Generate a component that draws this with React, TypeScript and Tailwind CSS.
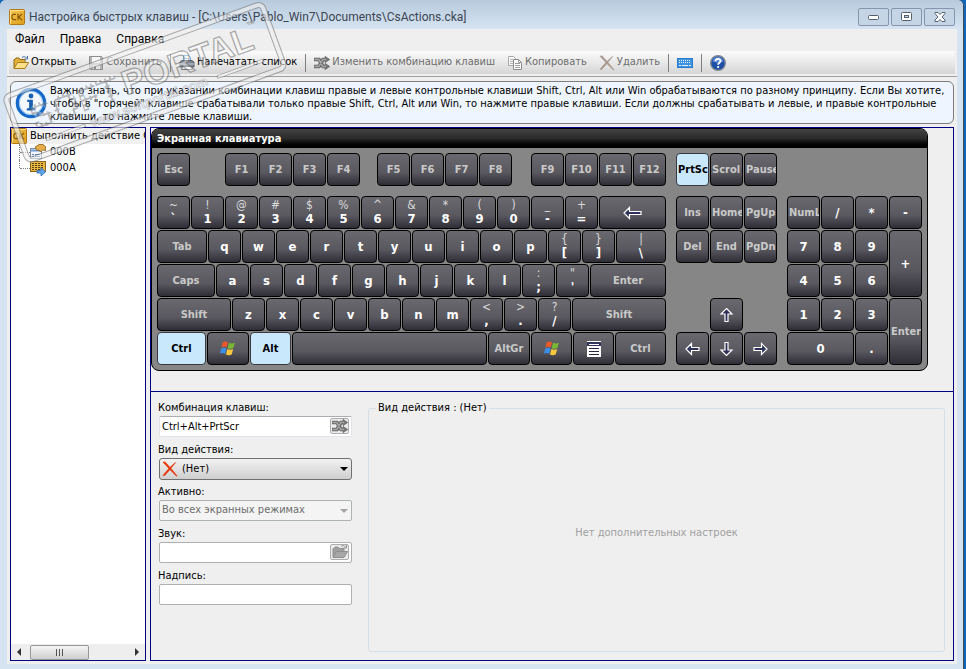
import { useState } from "react";
import type { ReactNode } from "react";
import clsx from "clsx";

const UI_FONT = "font-['DejaVu_Sans_Condensed','DejaVu_Sans',sans-serif]";
const CAPTION_FONT = "font-['Roboto','Noto_Sans',sans-serif]";

function AppIcon() {
  return (
    <svg width="16" height="16" viewBox="0 0 16 16" className="shrink-0" aria-hidden="true">
      <defs>
        <linearGradient id="gold" x1="0" y1="0" x2="1" y2="1">
          <stop offset="0" stopColor="#f7c955" />
          <stop offset="1" stopColor="#dc9c18" />
        </linearGradient>
      </defs>
      <rect x="0.5" y="0.5" width="15" height="15" rx="1" fill="url(#gold)" stroke="#b37a12" />
      <path d="M1.5 14.5V1.5H14.5" fill="none" stroke="#ffe08c" />
      <path d="M7 5.300H4.200L3 6.500v3l1.200 1.200H7M9 4.800v6.400M13 4.800L9.800 8l3.200 3.200" fill="none" stroke="#855608" strokeWidth="1.200" />
    </svg>
  );
}

function FolderIcon({ muted = false }: { muted?: boolean }) {
  return (
    <svg width="16" height="16" viewBox="0 0 16 16" className="shrink-0" aria-hidden="true">
      <path d="M1 13V4.500h1l1-1.500h3l1 1.500h5V8" fill={muted ? "#a0a0a0" : "#e3b23c"} stroke={muted ? "#8e8e8e" : "#8f6a12"} />
      <path d="M1 13.500L4.500 7.500H15.500L12 13.500z" fill={muted ? "#a8a8a8" : "#ffe08a"} stroke={muted ? "#8e8e8e" : "#a67c1a"} />
      <path d="M9 2.500c1.500-1.500 3.500-1 4.500.500M14.500 1v3h-3" fill="none" stroke={muted ? "#8e8e8e" : "#4b6ea5"} />
    </svg>
  );
}

function FloppyIcon() {
  return (
    <svg width="16" height="16" viewBox="0 0 16 16" className="shrink-0" aria-hidden="true">
      <path d="M1.500 1.500h12l1 1v12h-12l-1-1z" fill="#b4b4b4" stroke="#8f8f8f" />
      <rect x="4" y="2" width="8" height="6" fill="#f6f6f6" />
      <rect x="5" y="10" width="7" height="4" fill="#e6e6e6" />
      <rect x="6" y="11" width="2" height="3" fill="#8f8f8f" />
    </svg>
  );
}

function PrinterIcon() {
  return (
    <svg width="16" height="16" viewBox="0 0 16 16" className="shrink-0" aria-hidden="true">
      <path d="M4.500 7V.500h5l2 2V7" fill="#fff" stroke="#6fb0dc" />
      <path d="M6 3.500h3M6 5.500h4" stroke="#7cc0ea" />
      <path d="M1 7l2-1.500h10L15 7v5H1z" fill="#7d8590" stroke="#444a52" strokeWidth=".8" />
      <path d="M1 9h14" stroke="#c6ccd4" />
      <path d="M3.500 11.500h9l1 3h-11z" fill="#f5f8fb" stroke="#555c66" strokeWidth=".8" />
    </svg>
  );
}

function ShuffleIcon() {
  return (
    <svg width="16" height="14" viewBox="0 0 16 14" className="shrink-0" aria-hidden="true">
      <path d="M0 3.500h5l4 7h3M0 10.500h5l4-7h3" fill="none" stroke="#666" strokeWidth="3.600" />
      <path d="M11 .3L15.800 3.500 11 6.700zM11 7.300l4.800 3.200L11 13.700z" fill="#777" stroke="#555" strokeWidth=".5" />
      <path d="M.6 3.500h4.200l4 7H12M.6 10.500h4.200l4-7H12" fill="none" stroke="#aaa" strokeWidth="1.500" />
    </svg>
  );
}

function CopyIcon() {
  return (
    <svg width="16" height="16" viewBox="0 0 16 16" className="shrink-0" aria-hidden="true">
      <path d="M1.500 1.500h5l2 2v7h-7z" fill="#fafafa" stroke="#a9a9a9" />
      <path d="M3 4.500h3M3 6.500h3M3 8.500h3" stroke="#b5b5b5" />
      <path d="M6.500 4.500h5l3 3v7h-8z" fill="#fff" stroke="#8b8b8b" />
      <path d="M11.500 4.500v3h3M8 8.500h5M8 10.500h5M8 12.500h5" fill="none" stroke="#9d9d9d" />
    </svg>
  );
}

function CrossIcon({ color }: { color: string }) {
  return (
    <svg width="16" height="16" viewBox="0 0 16 16" className="shrink-0" aria-hidden="true">
      <path d="M.5 1l2.500-.5 5 5.500 5-4.500 1.500-.5-5.300 6.300L15.500 15l-1 .5L8 9 2.500 15 .5 14.500 6.500 7.500z" fill={color} />
    </svg>
  );
}

function KeyboardIcon() {
  return (
    <svg width="16" height="10" viewBox="0 0 16 10" className="shrink-0" aria-hidden="true">
      <rect x=".5" y=".5" width="15" height="9" fill="#3d93e0" stroke="#2b7ccb" />
      <path d="M2 2.500h12M2 4.500h12" stroke="#e4f2ff" strokeDasharray="1 1" />
      <path d="M2 7.500h2M5 7.500h6M12 7.500h2" stroke="#e4f2ff" />
    </svg>
  );
}

function HelpIcon() {
  return (
    <svg width="16" height="16" viewBox="0 0 16 16" className="shrink-0" aria-hidden="true">
      <circle cx="8" cy="8" r="7.300" fill="#1c4fa5" stroke="#7d8794" strokeWidth="1.400" />
      <path d="M2.500 6.500a5.600 5.600 0 0 1 11 0c-3 1.500-8 1.500-11 0z" fill="#5a8ad6" />
      <path d="M5.600 6.200c0-3.200 4.900-3 4.900-.2C10.500 7.700 8.100 7.800 8.100 9.800" fill="none" stroke="#fff" strokeWidth="1.800" />
      <rect x="7.200" y="11" width="1.900" height="1.900" fill="#fff" />
    </svg>
  );
}

function InfoIcon() {
  return (
    <svg width="32" height="34" viewBox="0 0 34 34" className="shrink-0" aria-hidden="true">
      <circle cx="17" cy="17" r="14.500" fill="#f4f9ff" stroke="#1468c8" strokeWidth="3.500" />
      <circle cx="17" cy="17" r="12.300" fill="none" stroke="#7db7f0" strokeWidth=".8" />
      <circle cx="17" cy="9.500" r="2.600" fill="#1b5fae" />
      <path d="M13 13.500h6v9h2.500v2.500h-9v-2.500H15v-6.500h-2z" fill="#1b5fae" />
    </svg>
  );
}

function PropertiesIcon() {
  return (
    <svg width="16" height="16" viewBox="0 0 16 16" className="shrink-0" aria-hidden="true">
      <rect x=".5" y="4.500" width="11" height="10" fill="#f3f7fc" stroke="#7c8ea6" />
      <path d="M1 6.500h10" stroke="#6f9bd2" strokeWidth="2" />
      <path d="M2 10.500h2M5 10.500h5M2 12.500h2M5 12.500h5" stroke="#5f86bb" />
      <path d="M5 3l4-2.500h4l2.500 2v4l-3-.5-2 2-1.500-2-2 .5z" fill="#e6ae4c" stroke="#8c5e1b" strokeWidth=".8" />
    </svg>
  );
}

function KeysIcon() {
  return (
    <svg width="16" height="16" viewBox="0 0 16 16" className="shrink-0" aria-hidden="true">
      <rect x=".5" y="1.500" width="15" height="10" fill="#e9b844" stroke="#8a641a" />
      <path d="M2 3.500h12M2 5.500h12M2 7.500h12M2 9.500h12" stroke="#5f4410" strokeDasharray="2 1" />
      <path d="M7 10.500h4V7.500l4.500 4.500-4.500 4v-3H7z" fill="#5fa8ee" stroke="#2a65ac" strokeWidth=".8" />
    </svg>
  );
}

function WindowsFlag() {
  return (
    <svg width="16" height="15" viewBox="0 0 16 15" aria-hidden="true">
      <path d="M2.600 1.500C4.500.2 6.300.3 8 1.300L6.700 6.600C5 5.600 3.100 5.600 1.300 6.700z" fill="#e8582a" />
      <path d="M9 1.800c1.800 1 3.800.9 5.900-.1l-1.500 5.400c-2 1-3.900 1-5.700.1z" fill="#79b833" />
      <path d="M1.100 7.700c1.800-1.100 3.600-1.100 5.400-.1L5.200 12.800C3.500 11.800 1.700 11.800-.1 12.900z" fill="#3c8fe6" />
      <path d="M7.400 8.100c1.900 1 3.800 1 5.800 0l-1.500 5.300c-2 1-3.900 1-5.700 0z" fill="#f8c73c" />
    </svg>
  );
}

function MenuKeyIcon() {
  return (
    <svg width="14" height="16" viewBox="0 0 14 16" aria-hidden="true">
      <path d="M0 .5h14" stroke="#fff" />
      <rect x="0" y="1" width="14" height="5" fill="#33365c" />
      <path d="M2 3.500h10" stroke="#fff" />
      <rect x="0" y="5" width="14" height="11" fill="#fff" />
      <path d="M2 7.500h10M2 10.500h10M2 13.500h10" stroke="#26263a" />
    </svg>
  );
}

function ArrowIcon({ className, long = false }: { className?: string; long?: boolean }) {
  const w = long ? 19 : 15;
  return (
    <svg width={w} height="14" viewBox={`0 0 ${w} 14`} className={className} aria-hidden="true">
      <path d={`M1 7L6.500 1.500V5.500H${w - 1}V8.500H6.500V12.500z`} fill="#2e3059" stroke="#fff" strokeWidth="1.200" />
    </svg>
  );
}

function Watermark() {
  return (
    <svg width="290" height="168" viewBox="0 0 290 168" className="pointer-events-none absolute top-0 left-0" aria-hidden="true">
      <defs>
        <pattern id="dots" width="5" height="5" patternUnits="userSpaceOnUse">
          <rect x="0.500" y="0.500" width="4" height="4" fill="#fff" fillOpacity=".6" stroke="#777" strokeWidth=".8" />
        </pattern>
      </defs>
      <g transform="translate(5 97) rotate(-20)" opacity=".6" fontFamily="'Liberation Sans', Arial, sans-serif" fontWeight="bold">
        <rect x="0" y="0" width="273" height="68" rx="5" fill="none" stroke="#777" strokeWidth="6" />
        <rect x="0" y="0" width="273" height="68" rx="5" fill="none" stroke="#f0f0f0" strokeWidth="4" />
        <text x="17" y="41" fontSize="35" fill="url(#dots)">SOFT</text>
        <text x="115" y="40" fontSize="34" fill="#fff" fillOpacity=".6" stroke="#777" strokeWidth="1.200">PORTAL</text>
        <text x="252" y="19" fontSize="9" fill="#fff" stroke="#888" strokeWidth=".5">™</text>
        <text x="72" y="58" fontSize="13" fill="#f4f4f4" stroke="#999" strokeWidth=".6">www.softportal.com</text>
        <path d="M24 54h42M206 54h50" stroke="#777" strokeWidth="3.500" />
        <path d="M25 54h40M207 54h48" stroke="#f8f8f8" strokeWidth="2" />
      </g>
    </svg>
  );
}

interface KeyProps {
  label?: string;
  top?: string;
  name?: string;
  big?: boolean;
  className?: string;
  children?: ReactNode;
}

function Key({ label, top, name, big, className, children }: KeyProps) {
  const [pressed, setPressed] = useState(label === "PrtSc" || name === "LCtrl" || name === "LAlt");

  return (
    <button
      type="button"
      aria-label={name}
      aria-pressed={pressed}
      onClick={() => setPressed(!pressed)}
      className={clsx(
        "flex h-[33px] shrink-0 flex-col items-center justify-center overflow-hidden rounded-[4px] border font-bold whitespace-nowrap",
        pressed
          ? "border-[#39393f] bg-[#cae8fb] text-black"
          : "border-black bg-linear-to-b from-[#6a696f] via-[#59585f] via-60% to-[#2f2d36]",
        !pressed && (big ? "text-white" : "text-[#c9c9c9]"),
        big ? "text-[13px] leading-[14px]" : "text-[11px] leading-[14px]",
        className ?? "w-[33px]"
      )}
    >
      {top && <span className="text-[12px] leading-[13px] font-normal text-[#dadada]">{top}</span>}
      {label && <span>{label}</span>}
      {children}
    </button>
  );
}

function FKeys({ from, to, className }: { from: number; to: number; className: string }) {
  const keys = [];
  for (let i = from; i <= to; i++) keys.push(`F${i}`);
  return (
    <div className={clsx("flex gap-px", className)}>
      {keys.map((k) => (
        <Key key={k} label={k} />
      ))}
    </div>
  );
}

const digits = [
  ["~", "`"], ["!", "1"], ["@", "2"], ["#", "3"], ["$", "4"], ["%", "5"], ["^", "6"],
  ["&", "7"], ["*", "8"], ["(", "9"], [")", "0"], ["_", "-"], ["+", "="],
];

function Keyboard() {
  return (
    <section className="w-fit overflow-hidden rounded-[8px] border border-black bg-[#868686]">
      <h2 className="h-[19px] bg-linear-to-b from-[#434343] via-[#2a2a2a] to-black pl-[5px] text-[11px] leading-[19px] font-bold text-white">
        Экранная клавиатура
      </h2>
      <div className="flex gap-[10px] p-[5px]">
        <div className="flex flex-col">
          <div className="mb-[10px] flex">
            <Key label="Esc" />
            <FKeys from={1} to={4} className="ml-[35px]" />
            <FKeys from={5} to={8} className="ml-[17px]" />
            <FKeys from={9} to={12} className="ml-[19px]" />
          </div>
          <div className="flex flex-col gap-px">
            <div className="flex gap-px">
              {digits.map(([t, k]) => (
                <Key key={k} top={t} label={k} big />
              ))}
              <Key name="Backspace" className="w-[67px]">
                <ArrowIcon long />
              </Key>
            </div>
            <div className="flex gap-px">
              <Key label="Tab" className="w-[50px]" />
              {"qwertyuiop".split("").map((k) => (
                <Key key={k} label={k} big />
              ))}
              <Key top="{" label="[" big />
              <Key top="}" label="]" big />
              <Key top="|" label="\" big className="w-[50px]" />
            </div>
            <div className="flex gap-px">
              <Key label="Caps" className="w-[58px]" />
              {"asdfghjkl".split("").map((k) => (
                <Key key={k} label={k} big />
              ))}
              <Key top=":" label=";" big />
              <Key top={'"'} label="'" big />
              <Key label="Enter" className="w-[76px]" />
            </div>
            <div className="flex gap-px">
              <Key label="Shift" className="w-[74px]" />
              {"zxcvbnm".split("").map((k) => (
                <Key key={k} label={k} big />
              ))}
              <Key top="<" label="," big />
              <Key top=">" label="." big />
              <Key top="?" label="/" big />
              <Key label="Shift" className="w-[94px]" />
            </div>
            <div className="flex gap-px">
              <Key name="LCtrl" label="Ctrl" className="w-[49px]" />
              <Key name="LWin" className="w-[42px]">
                <WindowsFlag />
              </Key>
              <Key name="LAlt" label="Alt" className="w-[41px]" />
              <Key name="Space" className="flex-1" />
              <Key label="AltGr" className="w-[42px]" />
              <Key name="RWin" className="w-[41px]">
                <WindowsFlag />
              </Key>
              <Key name="Menu" className="w-[41px]">
                <MenuKeyIcon />
              </Key>
              <Key label="Ctrl" className="w-[51px]" />
            </div>
          </div>
        </div>

        <div className="flex flex-col justify-between">
          <div className="flex flex-col gap-[10px]">
            <div className="flex gap-px">
              <Key label="PrtSc" className="w-[33px] items-start pl-px" />
              <Key label="Scrol" className="w-[33px] items-start pl-px" />
              <Key label="Pause" className="w-[33px] items-start pl-px" />
            </div>
            <div className="grid grid-cols-3 gap-px">
              <Key label="Ins" />
              <Key label="Home" className="w-[33px] items-start pl-px" />
              <Key label="PgUp" className="w-[33px] items-start pl-px" />
              <Key label="Del" />
              <Key label="End" />
              <Key label="PgDn" className="w-[33px] items-start pl-px" />
            </div>
          </div>
          <div className="grid grid-cols-3 gap-px">
            <Key name="Up" className="col-start-2 w-[33px]">
              <ArrowIcon className="rotate-90" />
            </Key>
            <Key name="Left" className="col-start-1 w-[33px]">
              <ArrowIcon />
            </Key>
            <Key name="Down">
              <ArrowIcon className="-rotate-90" />
            </Key>
            <Key name="Right">
              <ArrowIcon className="rotate-180" />
            </Key>
          </div>
        </div>

        <div className="grid grid-cols-4 gap-px self-end">
          <Key label="NumL" className="w-[33px] items-start pl-px" />
          <Key label="/" big />
          <Key label="*" big />
          <Key label="-" big />
          <Key label="7" big />
          <Key label="8" big />
          <Key label="9" big />
          <Key label="+" big className="row-span-2 h-full w-[33px]" />
          <Key label="4" big />
          <Key label="5" big />
          <Key label="6" big />
          <Key label="1" big />
          <Key label="2" big />
          <Key label="3" big />
          <Key label="Enter" className="row-span-2 h-full w-[33px] items-start pl-px" />
          <Key label="0" big className="col-span-2 w-full" />
          <Key label="." big />
        </div>
      </div>
    </section>
  );
}

function ToolButton({ icon, label, title, disabled }: { icon: ReactNode; label?: string; title?: string; disabled?: boolean }) {
  return (
    <button
      type="button"
      aria-label={title}
      disabled={disabled}
      className="flex items-center gap-[2px] px-1 whitespace-nowrap text-black disabled:text-[#6d6d6d]"
    >
      {icon}
      {label && <span>{label}</span>}
    </button>
  );
}

function Separator() {
  return <div className="h-[18px] w-px bg-[#808080]" />;
}

function Toolbar() {
  return (
    <div className="border-b border-[#a0a0a0] pb-[2px]">
      <div className="mx-[2px] flex h-[23px] items-center gap-1 bg-linear-to-b from-[#fbfbfb] to-[#d6d6d6]">
        <ToolButton icon={<FolderIcon />} label="Открыть" />
        <ToolButton icon={<FloppyIcon />} label="Сохранить" disabled />
        <Separator />
        <ToolButton icon={<PrinterIcon />} label="Напечатать список" />
        <Separator />
        <ToolButton icon={<ShuffleIcon />} label="Изменить комбинацию клавиш" disabled />
        <ToolButton icon={<CopyIcon />} label="Копировать" disabled />
        <ToolButton icon={<CrossIcon color="#a8998f" />} label="Удалить" disabled />
        <Separator />
        <ToolButton icon={<KeyboardIcon />} title="Клавиатура" />
        <Separator />
        <ToolButton icon={<HelpIcon />} title="Справка" />
      </div>
    </div>
  );
}

function TitleBar() {
  const button = "flex h-[18px] w-[31px] items-center justify-center rounded-[2px] border border-[#8496ad] bg-[#c6d5e5]";
  return (
    <header className="flex h-[29px] items-center rounded-t-[6px] bg-linear-to-b from-[#b7cadc] to-[#d6e4f2] pt-[5px] pr-2 pl-[9px]">
      <AppIcon />
      <h1 className={clsx("ml-1 flex-1 truncate text-[12px] text-[#3b4552]", CAPTION_FONT)}>
        Настройка быстрых клавиш - [C:\Users\Pablo_Win7\Documents\CsActions.cka]
      </h1>
      <div className="flex gap-[2px]">
        <button type="button" aria-label="Свернуть" className={button}>
          <svg width="12" height="6" viewBox="0 0 12 6" aria-hidden="true">
            <rect x=".5" y="1.500" width="10" height="4" rx="1" fill="#fff" stroke="#55606e" />
          </svg>
        </button>
        <button type="button" aria-label="Развернуть" className={button}>
          <svg width="12" height="10" viewBox="0 0 12 10" aria-hidden="true">
            <rect x=".5" y=".5" width="10" height="8" rx="1" fill="#fff" stroke="#55606e" />
            <rect x="3.500" y="3.500" width="4" height="2" fill="#c6d5e5" stroke="#55606e" />
          </svg>
        </button>
        <button type="button" aria-label="Закрыть" className={button}>
          <svg width="12" height="10" viewBox="0 0 12 10" aria-hidden="true">
            <path d="M1 .5h3l2 2 2-2h3v1L8 5l3 3v1.500H8l-2-2-2 2H1V8l3-3-3-3.500z" fill="#fff" stroke="#55606e" />
          </svg>
        </button>
      </div>
    </header>
  );
}

function ActionTree() {
  return (
    <aside className="flex w-[136px] shrink-0 flex-col overflow-hidden border border-[#000080] bg-white">
      <div className="flex h-4 items-center gap-[3px] bg-[#f0f0f0] leading-4 whitespace-nowrap">
        <AppIcon />
        <span>Выполнить действие C</span>
      </div>
      <ul className="ml-[8px] leading-4">
        {[
          { name: "000B", icon: <PropertiesIcon />, last: false },
          { name: "000A", icon: <KeysIcon />, last: true },
        ].map((item) => (
          <li key={item.name} className="flex h-4 items-center">
            <span className={clsx("w-px self-start border-l border-dotted border-[#808080]", item.last ? "h-2" : "h-4")} />
            <span className="w-[10px] border-t border-dotted border-[#808080]" />
            {item.icon}
            <span className="ml-1">{item.name}</span>
          </li>
        ))}
      </ul>
      <div className="mt-auto flex h-4 items-center bg-[#eeeeee]">
        <svg width="16" height="9" viewBox="0 0 16 9" aria-hidden="true">
          <path d="M10 0v8L6 4z" fill="#333" />
        </svg>
        <div className="ml-[3px] flex h-[15px] w-[59px] items-center justify-center gap-[2px] rounded-[2px] border border-[#979797] bg-linear-to-b from-[#f5f5f5] to-[#cfcfcf]">
          <i className="h-[7px] w-px bg-[#555]" />
          <i className="h-[7px] w-px bg-[#555]" />
          <i className="h-[7px] w-px bg-[#555]" />
        </div>
        <svg width="16" height="9" viewBox="0 0 16 9" className="ml-auto" aria-hidden="true">
          <path d="M6 0v8l4-4z" fill="#333" />
        </svg>
      </div>
    </aside>
  );
}

function Field({ id, label, children }: { id: string; label: string; children: ReactNode }) {
  return (
    <div className="flex flex-col">
      <label htmlFor={id} className="h-4 leading-4">
        {label}
      </label>
      <div className="relative ml-px flex h-[22px] w-[193px]">{children}</div>
    </div>
  );
}

function SmallButton({ title, children }: { title: string; children: ReactNode }) {
  return (
    <button
      type="button"
      aria-label={title}
      className="absolute top-[2px] right-[3px] flex h-4 w-[19px] items-center justify-center rounded-[2px] border border-[#adadad] bg-[#ececec]"
    >
      {children}
    </button>
  );
}

function DropArrow({ color }: { color: string }) {
  return (
    <svg width="8" height="4" viewBox="0 0 8 4" className="pointer-events-none absolute top-[9px] right-[4px]" aria-hidden="true">
      <path d="M0 0h8L4 4z" fill={color} />
    </svg>
  );
}

function Settings() {
  const [combo, setCombo] = useState("Ctrl+Alt+PrtScr");
  const [sound, setSound] = useState("");
  const [caption, setCaption] = useState("");
  const input = "h-[21px] w-full rounded-[2px] border bg-white px-[2px] outline-none";

  return (
    <div className="flex flex-1 gap-4 px-[8px] pt-[8px] pb-[8px] pl-[7px]">
      <div className="flex flex-col gap-1">
        <Field id="combo" label="Комбинация клавиш:">
          <input id="combo" type="text" value={combo} onChange={(e) => setCombo(e.target.value)} className={clsx(input, "border-[#e2e3ea] border-t-[#abadb3]")} />
          <SmallButton title="Изменить">
            <ShuffleIcon />
          </SmallButton>
        </Field>
        <Field id="kind" label="Вид действия:">
          <select id="kind" className="w-full appearance-none rounded-[3px] border border-[#707070] bg-linear-to-b from-[#f2f2f2] to-[#cfcfcf] pl-[22px] outline-none">
            <option>(Нет)</option>
          </select>
          <span className="pointer-events-none absolute top-[3px] left-[3px]">
            <CrossIcon color="#e8380d" />
          </span>
          <DropArrow color="#000" />
        </Field>
        <Field id="active" label="Активно:">
          <select id="active" disabled className="h-[21px] w-full appearance-none rounded-[2px] border border-[#adb2b5] bg-[#f4f4f4] px-[2px] text-[#6d6d6d] opacity-100">
            <option>Во всех экранных режимах</option>
          </select>
          <DropArrow color="#a5a5a5" />
        </Field>
        <Field id="sound" label="Звук:">
          <input id="sound" type="text" value={sound} onChange={(e) => setSound(e.target.value)} className={clsx(input, "border-[#afafaf]")} />
          <SmallButton title="Обзор">
            <FolderIcon muted />
          </SmallButton>
        </Field>
        <Field id="caption" label="Надпись:">
          <input id="caption" type="text" value={caption} onChange={(e) => setCaption(e.target.value)} className={clsx(input, "border-[#afafaf]")} />
        </Field>
      </div>
      <fieldset className="flex flex-1 items-center justify-center rounded-[3px] border border-[#d5dfe5]">
        <legend className="ml-[7px] h-4 px-[2px] leading-4">Вид действия : (Нет)</legend>
        <p className="text-[#a0a0a0]">Нет дополнительных настроек</p>
      </fieldset>
    </div>
  );
}

export default function App() {
  return (
    <div className="min-h-screen bg-[#1467b8] pr-[2px]">
      <div className={clsx("relative flex min-h-screen flex-col rounded-t-[6px] border-r border-[#3f4a55] bg-[#d6e4f2]", UI_FONT)}>
        <TitleBar />
        <main className="mr-[6px] mb-[5px] ml-[7px] flex flex-1 flex-col bg-[#efefef] text-[11px] text-black">
          <nav className={clsx("flex h-[22px] items-center gap-[15px] pb-[2px] pl-2 text-[12px]", CAPTION_FONT)}>
            <button type="button">Файл</button>
            <button type="button">Правка</button>
            <button type="button">Справка</button>
          </nav>
          <Toolbar />
          <div className="mx-[3px] mt-[4px] flex h-[43px] items-center gap-[3px] rounded-[6px] border border-[#7d7d7d] bg-[#eef5fe] pl-1">
            <InfoIcon />
            <p className="pt-[2px] leading-[13px] whitespace-nowrap">
              Важно знать, что при указании комбинации клавиш правые и левые контрольные клавиши Shift, Ctrl, Alt или Win обрабатываются по разному принципу. Если Вы хотите,
              <br />
              чтобы в "горячей" клавише срабатывали только правые Shift, Ctrl, Alt или Win, то нажмите правые клавиши. Если должны срабатывать и левые, и правые контрольные
              <br />
              клавиши, то нажмите левые клавиши.
            </p>
          </div>
          <div className="mx-[3px] mt-[3px] mb-[3px] flex flex-1 gap-1">
            <ActionTree />
            <div className="flex flex-1 flex-col border border-[#000080]">
              <div className="border-b border-[#000080] pb-5">
                <Keyboard />
              </div>
              <Settings />
            </div>
          </div>
        </main>
        <Watermark />
      </div>
    </div>
  );
}
